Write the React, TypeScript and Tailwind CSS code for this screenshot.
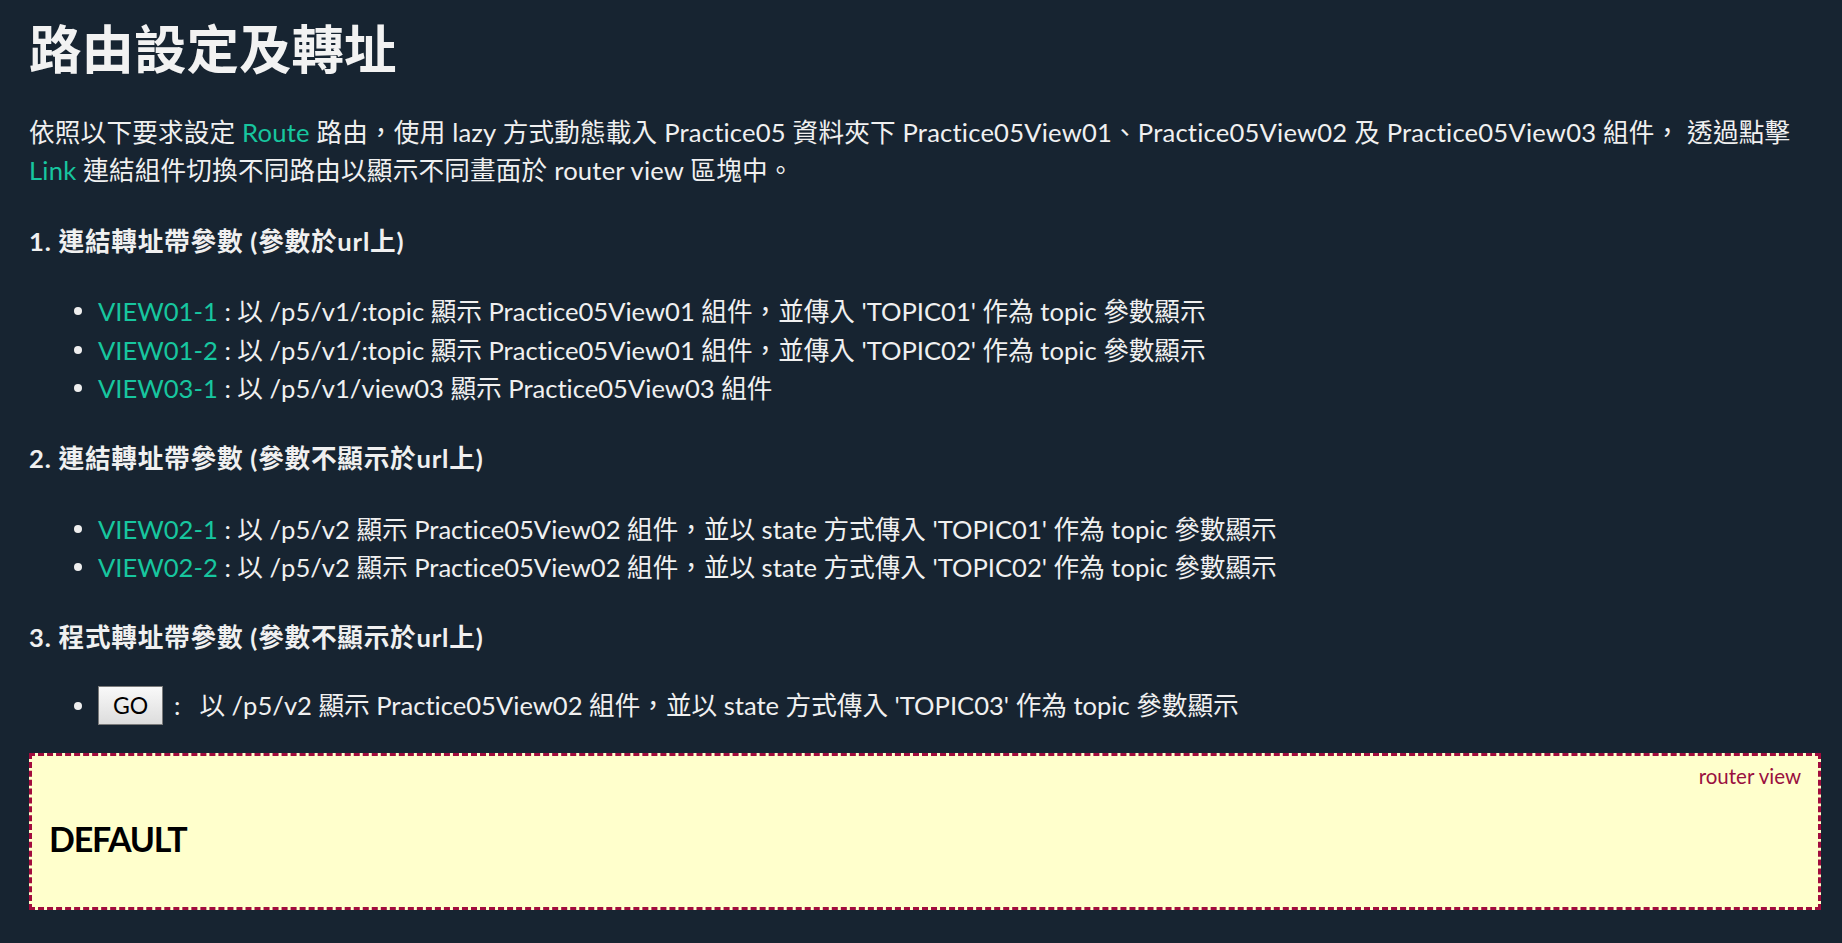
import React from 'react';

const green = 'text-[#17c69f]';

const Bullet = () => <span className="ml-[45px] mr-[16px] h-[8px] w-[8px] shrink-0 rounded-full bg-[#eeeeee]" />;

const Item = ({ label, children }: { label: string; children: React.ReactNode }) => (
    <li className="flex items-center leading-[38.4px]">
        <Bullet />
        <span className="whitespace-nowrap">
            <span className={green}>{label}</span> : {children}
        </span>
    </li>
);

const App = () => {
    const sections = [
        {
            title: '1. 連結轉址帶參數 (參數於url上)',
            items: [
                { label: 'VIEW01-1', text: "以 /p5/v1/:topic 顯示 Practice05View01 組件，並傳入 'TOPIC01' 作為 topic 參數顯示" },
                { label: 'VIEW01-2', text: "以 /p5/v1/:topic 顯示 Practice05View01 組件，並傳入 'TOPIC02' 作為 topic 參數顯示" },
                { label: 'VIEW03-1', text: '以 /p5/v1/view03 顯示 Practice05View03 組件' },
            ],
        },
        {
            title: '2. 連結轉址帶參數 (參數不顯示於url上)',
            items: [
                { label: 'VIEW02-1', text: "以 /p5/v2 顯示 Practice05View02 組件，並以 state 方式傳入 'TOPIC01' 作為 topic 參數顯示" },
                { label: 'VIEW02-2', text: "以 /p5/v2 顯示 Practice05View02 組件，並以 state 方式傳入 'TOPIC02' 作為 topic 參數顯示" },
            ],
        },
    ];

    return (
        <div className="min-h-screen bg-[#172431] pl-[29px] pr-[21px] pt-[18px] pb-[34px] font-['Lato','Noto_Sans_CJK_TC',sans-serif] text-[25.6px] leading-[38.4px] text-[#f0f0f0] [font-variant-ligatures:none]">
            <h1 className="text-[52.5px] font-bold leading-[62px] text-[#f2f2f2]">路由設定及轉址</h1>

            <p className="mt-[33px] tracking-[0.2px]">
                <span className="block whitespace-nowrap">
                    依照以下要求設定 <span className={green}>Route</span> 路由，使用 lazy 方式動態載入 Practice05 資料夾下
                    Practice05View01、Practice05View02 及 Practice05View03 組件， 透過點擊
                </span>
                <span className="block">
                    <span className={green}>Link</span> 連結組件切換不同路由以顯示不同畫面於 router view 區塊中。
                </span>
            </p>

            {sections.map((section) => (
                <div key={section.title}>
                    <h2 className="mt-[32px] font-bold tracking-[0.8px]">{section.title}</h2>
                    <ul className="mt-[32px]">
                        {section.items.map((item) => (
                            <Item key={item.label} label={item.label}>
                                {item.text}
                            </Item>
                        ))}
                    </ul>
                </div>
            ))}

            <h2 className="mt-[31px] font-bold tracking-[0.8px]">3. 程式轉址帶參數 (參數不顯示於url上)</h2>
            <ul className="mt-[30px]">
                <li className="flex items-center">
                    <Bullet />
                    <button className="h-[39px] w-[65px] border border-[#7a7a7a] bg-linear-to-b from-[#f9f9f9] to-[#dddddd] text-[23px] leading-none text-black">
                        GO
                    </button>
                    <span className="ml-[11px]">:</span>
                    <span className="ml-[19px] whitespace-nowrap">
                        以 /p5/v2 顯示 Practice05View02 組件，並以 state 方式傳入 'TOPIC03' 作為 topic 參數顯示
                    </span>
                </li>
            </ul>

            <div className="relative mt-[28px] h-[157px] border-[3px] border-dashed border-[#a10c3d] bg-[#ffffcc] pl-[17px] pt-[62px]">
                <span className="absolute right-[17px] top-[5px] text-[20.5px] leading-[30px] text-[#9a1040]">router view</span>
                <h3 className="text-[34px] font-bold leading-[41px] tracking-[-1.2px] text-black">DEFAULT</h3>
            </div>
        </div>
    );
};

export default App;
